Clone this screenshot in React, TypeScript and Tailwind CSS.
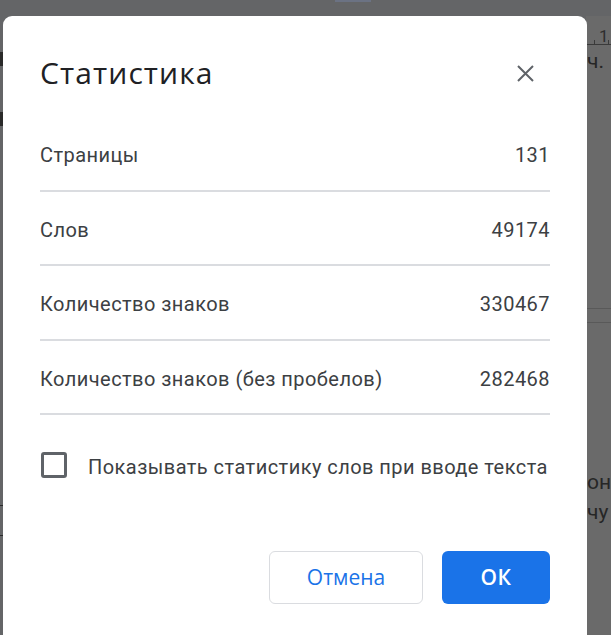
import React from "react";

const rows: [string, string][] = [
  ["Страницы", "131"],
  ["Слов", "49174"],
  ["Количество знаков", "330467"],
  ["Количество знаков (без пробелов)", "282468"],
];

export default function App() {
  return (
    <div
      className="relative w-[611px] h-[635px] overflow-hidden bg-[#646567]"
      style={{ fontFamily: "Roboto, 'Noto Sans', sans-serif" }}
    >
      {/* dimmed document behind the dialog */}
      <div className="absolute left-[586px] top-[16px] w-[40px] h-[640px] bg-[#6a6a6a] whitespace-nowrap">
        <span className="absolute left-[13px] top-[8px] text-[17px] text-[#2e2e2e]">1</span>
        <div className="absolute left-0 top-[28px] w-full h-px bg-[#3a3a3a]" />
        <div className="absolute left-[8px] top-[24px] w-px h-[4px] bg-[#3a3a3a]" />
        <div className="absolute left-[22px] top-[24px] w-px h-[4px] bg-[#3a3a3a]" />
        <span className="absolute left-[1px] top-[30px] text-[21px] text-[#262626]">ч.</span>
        <div className="absolute left-0 top-[292px] w-full h-px bg-[#595959]" />
        <div className="absolute left-0 top-[306px] w-full h-px bg-[#595959]" />
        <span className="absolute left-[1px] top-[451px] text-[21px] text-[#262626]">он д</span>
        <span className="absolute left-[1px] top-[481px] text-[21px] text-[#262626]">чу</span>
      </div>
      <div className="absolute left-[335px] top-0 w-[36px] h-[2px] bg-[#6b7283]" />
      <div className="absolute left-0 top-[52px] w-[3px] h-[14px] bg-[#2a2a2a]" />
      <div className="absolute left-0 top-[112px] w-[3px] h-[14px] bg-[#2a2a2a]" />
      <div className="absolute left-0 top-[505px] w-[3px] h-px bg-[#2a2a2a]" />
      <div className="absolute left-0 top-[535px] w-[3px] h-px bg-[#2a2a2a]" />

      {/* dialog */}
      <div className="absolute left-[3px] top-[16px] w-[584px] h-[660px] bg-white rounded-[9px] px-[37px]">
        <div className="flex items-center justify-between pt-[39px] mb-[26px]">
          <h1
            className="text-[30px] leading-[36px] text-[#202124] tracking-[1.1px]"
            style={{ fontFamily: "'Open Sans', Roboto, sans-serif" }}
          >
            Статистика
          </h1>
          <button className="mr-[16px] w-[17px] h-[17px] flex items-center justify-center">
            <svg width="17" height="17" viewBox="0 0 17 17">
              <path d="M1 1L16 16M16 1L1 16" stroke="#5f6368" strokeWidth="2" />
            </svg>
          </button>
        </div>

        {rows.map(([label, value]) => (
          <div
            key={label}
            className="flex items-center justify-between pt-[26px] pb-[22.5px] border-b-2 border-[#dadce0] text-[20px] leading-[24px] tracking-[0.45px] text-[#3c4043]"
          >
            <span>{label}</span>
            <span>{value}</span>
          </div>
        ))}

        <label className="flex items-center mt-[36px] text-[20px] leading-[24px] tracking-[0.45px] text-[#3c4043]">
          <span className="w-[26px] h-[26px] ml-[1px] border-[3px] border-[#5f6368] rounded-[3px] shrink-0" />
          <span className="ml-[21px] mt-[4px]">Показывать статистику слов при вводе текста</span>
        </label>

        <div className="flex justify-end gap-[19px] mt-[72px]">
          <button
            className="w-[154px] h-[53px] rounded-[6px] border border-[#dadce0] bg-white text-[#1a73e8] text-[21px] font-medium"
            style={{ fontFamily: "'Open Sans', Roboto, sans-serif" }}
          >
            Отмена
          </button>
          <button
            className="w-[108px] h-[53px] rounded-[6px] bg-[#1a73e8] text-white text-[21px] font-semibold tracking-[0.5px]"
            style={{ fontFamily: "'Open Sans', Roboto, sans-serif" }}
          >
            ОК
          </button>
        </div>
      </div>
    </div>
  );
}
